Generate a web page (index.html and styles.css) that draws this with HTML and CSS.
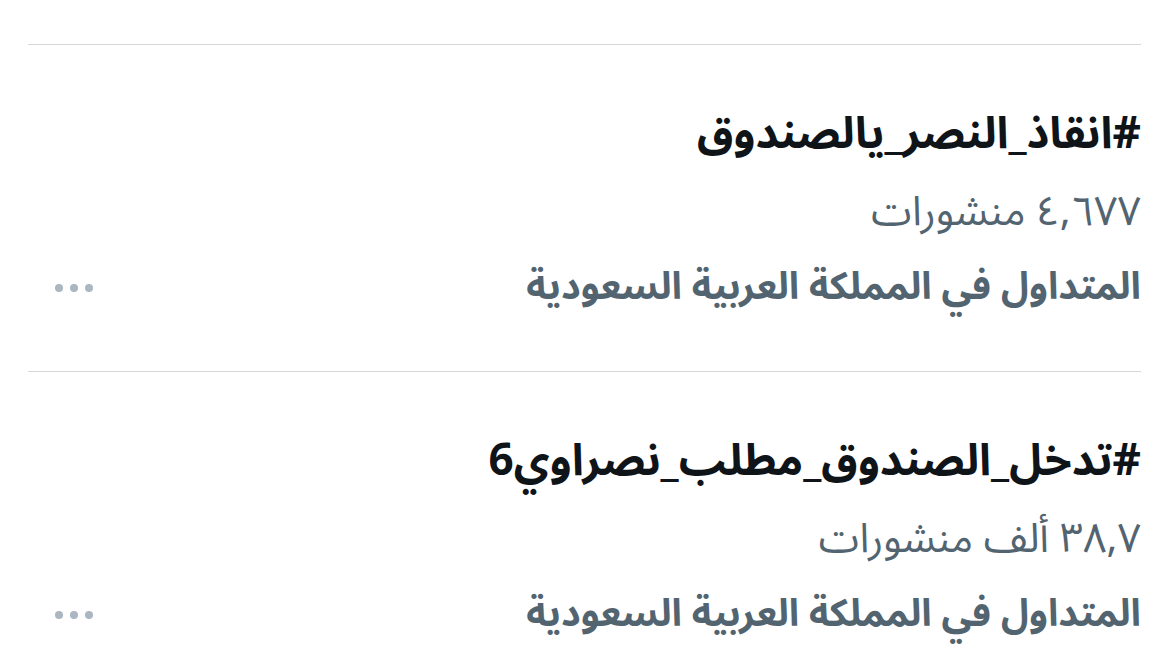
FILE: index.html
```html
<!DOCTYPE html>
<html lang="ar" dir="rtl">

<head>
    <meta charset="UTF-8">
    <meta name="viewport" content="width=device-width, initial-scale=1.0">
    <title>المتداول</title>
    <link rel="stylesheet" href="styles.css">
</head>

<body>
    <div class="trends">
        <div class="trend">
            <div class="trend-title">#انقاذ_النصر_يالصندوق</div>
            <div class="trend-count">٤,٦٧٧ منشورات</div>
            <div class="trend-meta">
                <span class="trend-place">المتداول في المملكة العربية السعودية</span>
                <button class="more" aria-label="المزيد"><i></i><i></i><i></i></button>
            </div>
        </div>
        <div class="trend">
            <div class="trend-title">#تدخل_الصندوق_مطلب_نصراوي6</div>
            <div class="trend-count">٣٨,٧ ألف منشورات</div>
            <div class="trend-meta">
                <span class="trend-place">المتداول في المملكة العربية السعودية</span>
                <button class="more" aria-label="المزيد"><i></i><i></i><i></i></button>
            </div>
        </div>
    </div>
</body>

</html>
```

FILE: styles.css
```css
* {
    padding: 0;
    margin: 0;
    box-sizing: border-box;
}

body {
    font-family: "Noto Sans Arabic", "DejaVu Sans", sans-serif;
    background-color: #fff;
    color: #0f1419;
    overflow: hidden;
}

.trends {
    padding: 0 28px;
}

.trend {
    border-top: 1px solid #d4d6d8;
    padding: 55px 0 46px;
    margin-top: 44px;
}

.trend + .trend {
    margin-top: 0;
}

.trend-title,
.trend-count,
.trend-meta {
    height: 75px;
    display: flex;
    align-items: center;
    line-height: 1.2;
}

.trend-title {
    font-size: 44px;
    font-weight: 700;
    color: #0f1419;
    margin-top: -3px;
    margin-bottom: 3px;
}

.trend-count {
    font-size: 41px;
    color: #536471;
}

.trend-meta {
    justify-content: space-between;
}

.trend-place {
    font-size: 38px;
    font-weight: 700;
    color: #536471;
}

.more {
    display: flex;
    gap: 7px;
    border: 0;
    background: none;
    margin-left: 27px;
    cursor: pointer;
}

.more i {
    width: 8px;
    height: 8px;
    border-radius: 50%;
    background-color: #aab6c2;
}
```
